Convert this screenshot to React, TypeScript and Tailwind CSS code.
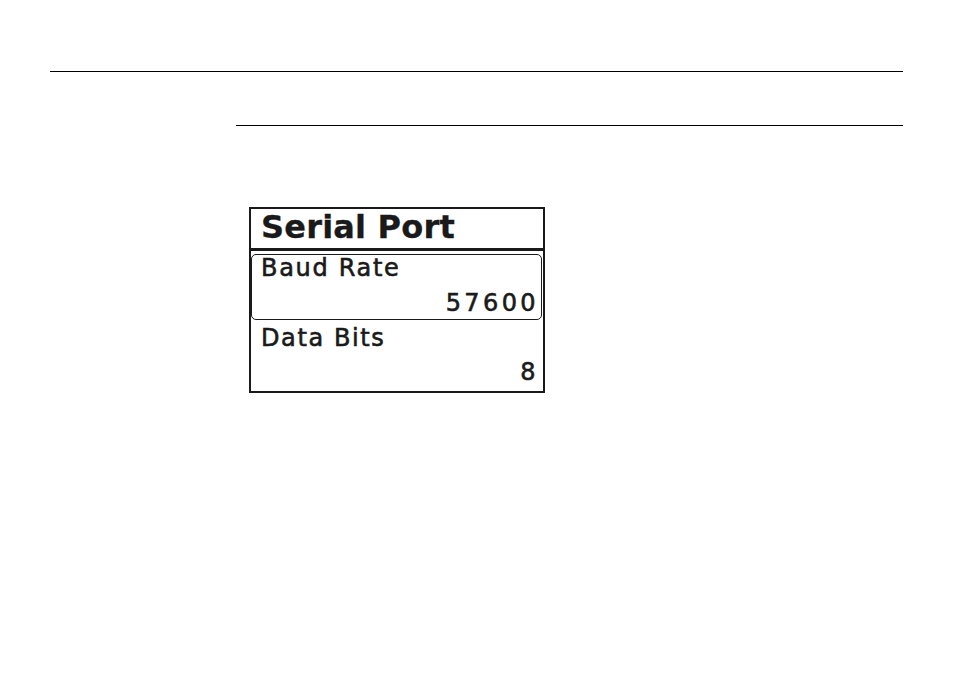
import React from "react";

export default function App() {
  const font = { fontFamily: '"DejaVu Sans", Verdana, sans-serif' };
  return (
    <div className="w-[954px] h-[677px] bg-white overflow-hidden" style={font}>
      <div className="pt-[71px] pl-[50px] pr-[51px]">
        <div className="h-px bg-black" />
      </div>
      <div className="pt-[53px] pl-[236px] pr-[51px]">
        <div className="h-px bg-black" />
      </div>
      <div className="pt-[81px] pl-[249px]">
        <div className="w-[296px] h-[186px] box-border border-2 border-[#1a1a1a] text-[#1a1a1a] flex flex-col">
          <div className="h-[39px] pl-[10px] text-[32px] font-bold leading-[36px] tracking-[0.2px] whitespace-nowrap [-webkit-text-stroke:0.3px_#1a1a1a]">
            Serial Port
          </div>
          <div className="h-[3px] bg-[#1a1a1a]" />
          <div className="mt-[3px] w-[291px] h-[66px] box-border border-[1.5px] border-[#1a1a1a] rounded-[5px]">
            <div className="pl-[9px] text-[24px] leading-[26px] tracking-[1.7px] whitespace-nowrap [-webkit-text-stroke:0.6px_#1a1a1a]">
              Baud Rate
            </div>
            <div className="mt-[9px] pr-[2px] text-right text-[24px] leading-[26px] tracking-[3.4px] whitespace-nowrap [-webkit-text-stroke:0.6px_#1a1a1a]">
              57600
            </div>
          </div>
          <div className="mt-[5px] pl-[10px] text-[24px] leading-[26px] tracking-[1.6px] whitespace-nowrap [-webkit-text-stroke:0.6px_#1a1a1a]">
            Data Bits
          </div>
          <div className="mt-[8px] pr-[4px] text-right text-[24px] leading-[26px] tracking-[3.4px] whitespace-nowrap [-webkit-text-stroke:0.6px_#1a1a1a]">
            8
          </div>
        </div>
      </div>
    </div>
  );
}
